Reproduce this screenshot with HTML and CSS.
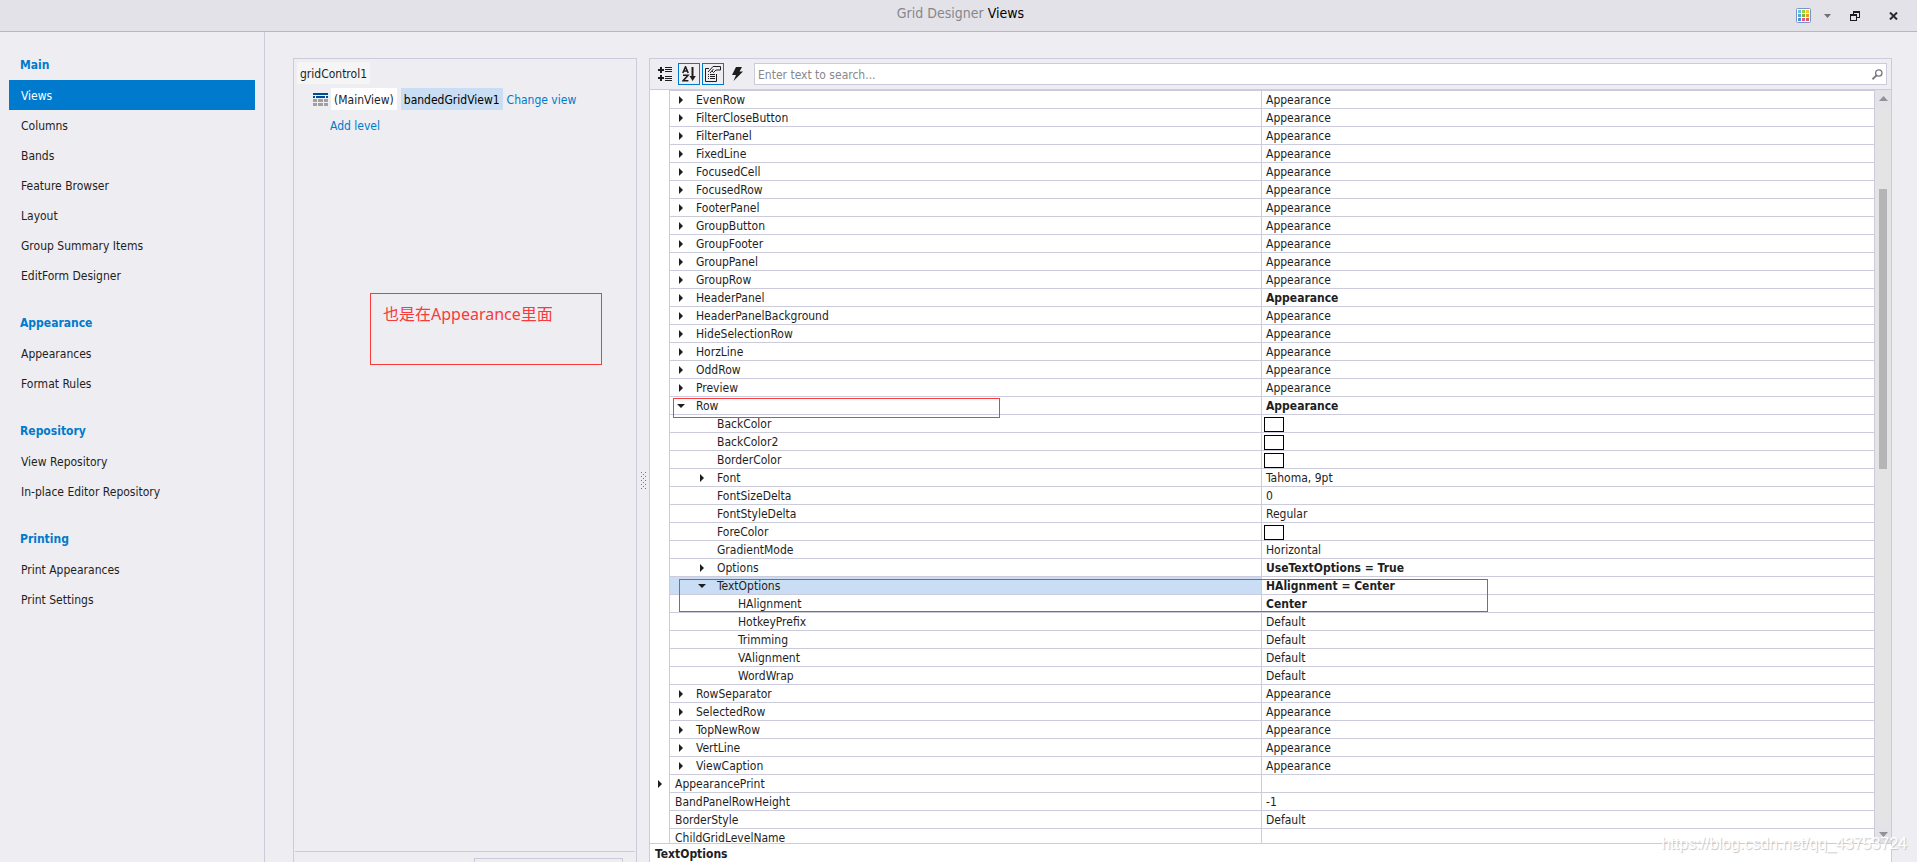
FILE: index.html
```html
<!DOCTYPE html>
<html lang="en">
<head>
<meta charset="utf-8">
<title>Grid Designer Views</title>
<link rel="stylesheet" href="styles.css">
</head>
<body>
<header class="titlebar">
  <h1 class="title"><span class="title-app">Grid Designer</span> Views</h1>
  <div class="window-buttons">
    <button class="win-btn skin" aria-label="Skin">
      <svg width="15" height="15" viewBox="0 0 15 15"><rect x=".5" y=".5" width="14" height="14" rx="1" fill="#fff" stroke="#7b93cc"/><path fill="#5fc9dc" d="M2 2h3v3H2z"/><path fill="#9ccb3b" d="M6 2h3v3H6z"/><path fill="#f0cd1e" d="M10 2h3v3h-3z"/><path fill="#57a3dc" d="M2 6h3v3H2z"/><path fill="#78b82a" d="M6 6h3v3H6z"/><path fill="#ec9a2d" d="M10 6h3v3h-3z"/><path fill="#4f8ade" d="M2 10h3v3H2z"/><path fill="#d957a5" d="M6 10h3v3H6z"/><path fill="#e0604c" d="M10 10h3v3h-3z"/></svg>
    </button>
    <button class="win-btn drop" aria-label="Skin menu">
      <svg width="7" height="4" viewBox="0 0 7 4"><path fill="#707075" d="M0 0h7L3.500 4z"/></svg>
    </button>
    <button class="win-btn restore" aria-label="Restore">
      <svg width="10" height="10" viewBox="0 0 10 10" fill="#1a1a1a"><path fill-rule="evenodd" d="M3 0h7v7H7V6h2V2H4v1H3zM0 3h7v7H0zM1 5v4h5V5z"/></svg>
    </button>
    <button class="win-btn close" aria-label="Close">
      <svg width="9" height="8" viewBox="0 0 9 8"><path d="M1 .5l7 7M8 .5l-7 7" stroke="#2a2a2a" stroke-width="2"/></svg>
    </button>
  </div>
</header>
<div class="workspace">
  <nav class="sidebar">
    <h2>Main</h2>
    <a href="#views" class="active">Views</a>
    <a href="#columns">Columns</a>
    <a href="#bands">Bands</a>
    <a href="#features">Feature Browser</a>
    <a href="#layout">Layout</a>
    <a href="#summary">Group Summary Items</a>
    <a href="#editform">EditForm Designer</a>
    <h2>Appearance</h2>
    <a href="#appearances">Appearances</a>
    <a href="#rules">Format Rules</a>
    <h2>Repository</h2>
    <a href="#view-repo">View Repository</a>
    <a href="#editor-repo">In-place Editor Repository</a>
    <h2>Printing</h2>
    <a href="#print-appearances">Print Appearances</a>
    <a href="#print-settings">Print Settings</a>
  </nav>
  <main class="content">
    <section class="levels">
      <div class="level-tree">
        <div class="level-root"><span class="chip">gridControl1</span></div>
        <div class="level-row">
          <svg width="15" height="13" viewBox="0 0 15 13" shape-rendering="crispEdges"><path fill="#004b93" d="M0 0h15v2H0zM0 3h2v2H0zM3 3h9v2H3zM13 3h2v2h-2z"/><path fill="#a0a0a3" d="M0 6h4v3H0zM5 6h5v3H5zM11 6h4v3h-4zM0 10h4v3H0zM5 10h5v3H5zM11 10h4v3h-4z"/></svg>
          <span class="chip main-view">(MainView)</span>
          <span class="chip view-name">bandedGridView1</span>
          <a href="#change">Change view</a>
        </div>
        <div class="level-add"><a href="#add">Add level</a></div>
      </div>
      <div class="levels-footer"><div class="footer-box"></div></div>
      <p class="note">也是在Appearance里面</p>
    </section>
    <div class="splitter">
      <svg width="5" height="17" viewBox="0 0 5 17" fill="#77777c" shape-rendering="crispEdges"><path d="M0 0h1v1H0zM4 0h1v1H4zM2 2h1v1H2zM0 4h1v1H0zM4 4h1v1H4zM2 6h1v1H2zM0 8h1v1H0zM4 8h1v1H4zM2 10h1v1H2zM0 12h1v1H0zM4 12h1v1H4zM2 14h1v1H2zM0 16h1v1H0zM4 16h1v1H4z"/></svg>
    </div>
    <section class="properties">
      <div class="toolbar">
        <button class="tool" aria-label="Categorized">
          <svg width="14" height="14" viewBox="0 0 14 14" fill="#1e1e1e"><path d="M0 2h2V0h2v2h2v2H4v2H2V4H0zM7 0h7v1H7zM7 2h7v1H7zM7 4h7v1H7zM0 10h2V8h2v2h2v2H4v2H2v-2H0zM7 9h7v1H7zM7 11h7v1H7zM7 13h7v1H7z"/></svg>
        </button>
        <button class="tool on" aria-label="Alphabetical">
          <svg width="14" height="16" viewBox="0 0 14 16" fill="none" stroke="#1e1e1e"><path stroke-width="1.600" d="M.8 7L3.500.8 6.200 7M1.800 5h3.500M1 9.300h5L1.200 14.700h5.200"/><path stroke-width="2" d="M10.500 1v11"/><path fill="#1e1e1e" stroke="none" d="M7.500 10h6.300l-3.200 5z"/></svg>
        </button>
        <button class="tool on" aria-label="Description">
          <svg width="16" height="16" viewBox="0 0 16 16" fill="none" stroke="#1e1e1e"><path d="M4 2.500H.500v13h11V8"/><path d="M3 6l5-5.500h7.500V4H11L8.500 6.500 7 5M5 7l3.500-4"/><path d="M3 8.500h1M5 8.500h5M3 10.500h1M5 10.500h5M3 12.500h1M5 12.500h5"/></svg>
        </button>
        <button class="tool" aria-label="Events">
          <svg width="11" height="14" viewBox="0 0 11 14" fill="#1e1e1e"><path d="M4 0h6L7.500 4.500H11L1.500 14 4 8H0z"/></svg>
        </button>
        <label class="search">
          <input type="text" aria-label="Search properties" placeholder="Enter text to search...">
          <svg width="11" height="11" viewBox="0 0 11 11" fill="none" stroke="#77777a"><circle cx="6.800" cy="4" r="3.200" stroke-width="1.300"/><path d="M4.500 6.300L.5 10.300" stroke-width="1.800"/></svg>
        </label>
      </div>
      <div class="grid">
        <div class="rows">
          <table>
            <colgroup><col class="c-gutter"><col class="c-name"><col></colgroup>
            <tbody>
              <tr><td></td><td class="l1"><button>EvenRow</button></td><td>Appearance</td></tr>
              <tr><td></td><td class="l1"><button>FilterCloseButton</button></td><td>Appearance</td></tr>
              <tr><td></td><td class="l1"><button>FilterPanel</button></td><td>Appearance</td></tr>
              <tr><td></td><td class="l1"><button>FixedLine</button></td><td>Appearance</td></tr>
              <tr><td></td><td class="l1"><button>FocusedCell</button></td><td>Appearance</td></tr>
              <tr><td></td><td class="l1"><button>FocusedRow</button></td><td>Appearance</td></tr>
              <tr><td></td><td class="l1"><button>FooterPanel</button></td><td>Appearance</td></tr>
              <tr><td></td><td class="l1"><button>GroupButton</button></td><td>Appearance</td></tr>
              <tr><td></td><td class="l1"><button>GroupFooter</button></td><td>Appearance</td></tr>
              <tr><td></td><td class="l1"><button>GroupPanel</button></td><td>Appearance</td></tr>
              <tr><td></td><td class="l1"><button>GroupRow</button></td><td>Appearance</td></tr>
              <tr><td></td><td class="l1"><button>HeaderPanel</button></td><td class="changed">Appearance</td></tr>
              <tr><td></td><td class="l1"><button>HeaderPanelBackground</button></td><td>Appearance</td></tr>
              <tr><td></td><td class="l1"><button>HideSelectionRow</button></td><td>Appearance</td></tr>
              <tr><td></td><td class="l1"><button>HorzLine</button></td><td>Appearance</td></tr>
              <tr><td></td><td class="l1"><button>OddRow</button></td><td>Appearance</td></tr>
              <tr><td></td><td class="l1"><button>Preview</button></td><td>Appearance</td></tr>
              <tr><td></td><td class="l1"><button class="open">Row</button></td><td class="changed">Appearance</td></tr>
              <tr><td></td><td class="l2">BackColor</td><td class="color"><span class="swatch"></span></td></tr>
              <tr><td></td><td class="l2">BackColor2</td><td class="color"><span class="swatch"></span></td></tr>
              <tr><td></td><td class="l2">BorderColor</td><td class="color"><span class="swatch"></span></td></tr>
              <tr><td></td><td class="l2"><button>Font</button></td><td>Tahoma, 9pt</td></tr>
              <tr><td></td><td class="l2">FontSizeDelta</td><td>0</td></tr>
              <tr><td></td><td class="l2">FontStyleDelta</td><td>Regular</td></tr>
              <tr><td></td><td class="l2">ForeColor</td><td class="color"><span class="swatch"></span></td></tr>
              <tr><td></td><td class="l2">GradientMode</td><td>Horizontal</td></tr>
              <tr><td></td><td class="l2"><button>Options</button></td><td class="changed">UseTextOptions = True</td></tr>
              <tr><td></td><td class="l2 selected"><button class="open">TextOptions</button></td><td class="changed">HAlignment = Center</td></tr>
              <tr><td></td><td class="l3">HAlignment</td><td class="changed">Center</td></tr>
              <tr><td></td><td class="l3">HotkeyPrefix</td><td>Default</td></tr>
              <tr><td></td><td class="l3">Trimming</td><td>Default</td></tr>
              <tr><td></td><td class="l3">VAlignment</td><td>Default</td></tr>
              <tr><td></td><td class="l3">WordWrap</td><td>Default</td></tr>
              <tr><td></td><td class="l1"><button>RowSeparator</button></td><td>Appearance</td></tr>
              <tr><td></td><td class="l1"><button>SelectedRow</button></td><td>Appearance</td></tr>
              <tr><td></td><td class="l1"><button>TopNewRow</button></td><td>Appearance</td></tr>
              <tr><td></td><td class="l1"><button>VertLine</button></td><td>Appearance</td></tr>
              <tr><td></td><td class="l1"><button>ViewCaption</button></td><td>Appearance</td></tr>
              <tr><td><button aria-label="Expand AppearancePrint"></button></td><td>AppearancePrint</td><td></td></tr>
              <tr><td></td><td>BandPanelRowHeight</td><td>-1</td></tr>
              <tr><td></td><td>BorderStyle</td><td>Default</td></tr>
              <tr><td></td><td>ChildGridLevelName</td><td></td></tr>
            </tbody>
          </table>
          <div class="mark mark-row"></div>
          <div class="mark mark-options"></div>
        </div>
        <div class="scrollbar">
          <svg width="9" height="5" viewBox="0 0 9 5"><path fill="#929296" d="M4.500 0L9 5H0z"/></svg>
          <div class="track"><div class="thumb"></div></div>
          <svg width="9" height="5" viewBox="0 0 9 5"><path fill="#929296" d="M0 0h9L4.500 5z"/></svg>
        </div>
      </div>
      <div class="description">TextOptions</div>
    </section>
  </main>
</div>
<div class="watermark">https://blog.csdn.net/qq_43753724</div>
</body>
</html>
```

FILE: styles.css
```css
*, *::before { box-sizing: border-box; }

:root {
  --line: #cbcbdc;
  --panel: #eeedf2;
  --blue: #007acc;
  --text: #1e1e1e;
  --red: #f83a3a;
}

body {
  margin: 0;
  height: 100vh;
  display: flex;
  flex-direction: column;
  overflow: hidden;
  background: var(--panel);
  color: var(--text);
  font: 12px/16px "DejaVu Sans Condensed", Tahoma, "Noto Sans", sans-serif;
}

button {
  padding: 0;
  border: 0;
  background: none;
  color: inherit;
  font: inherit;
}

a { color: var(--blue); text-decoration: none; }
svg { display: block; flex: none; }

/* title bar */
.titlebar {
  flex: none;
  position: relative;
  height: 32px;
  background: #e3e2e8;
  border-bottom: 1px solid #b4b4ca;
}
.title {
  margin: 0;
  padding: 3px 0 0 4px;
  font-size: 14px;
  line-height: 20px;
  font-weight: 400;
  text-align: center;
  color: #000;
}
.title-app { color: #88878c; }
.window-buttons {
  position: absolute;
  top: 0;
  right: 19px;
  height: 31px;
  display: flex;
  align-items: center;
}
.drop { margin-left: 13px; }
.restore { margin-left: 19px; }
.close { margin-left: 29px; }

.workspace { flex: 1; min-height: 0; display: flex; }

/* navigation */
.sidebar {
  flex: none;
  width: 265px;
  padding: 16px 9px 0;
  border-right: 1px solid var(--line);
}
.sidebar h2 {
  margin: 16px 0 0;
  padding: 2px 0 0 11px;
  font-size: 12px;
  line-height: 30px;
  color: var(--blue);
}
.sidebar h2:first-child { margin-top: 0; }
.sidebar a {
  display: block;
  padding: 2px 0 0 12px;
  line-height: 28px;
  color: var(--text);
}
.sidebar a.active { background: var(--blue); color: #fff; }

.content {
  flex: 1;
  min-width: 0;
  display: flex;
  padding: 26px 25px 0 28px;
}

/* level tree */
.levels {
  flex: none;
  position: relative;
  width: 344px;
  display: flex;
  flex-direction: column;
  border: 1px solid var(--line);
  border-bottom: 0;
}
.level-tree { flex: 1; padding: 3px; }
.chip { padding: 2px 3px 0; line-height: 20px; }
.level-root { display: flex; }
.level-root .chip { background: #f5f5f5; }
.level-row {
  display: flex;
  align-items: center;
  margin-top: 4px;
  padding-left: 16px;
}
.level-row a { padding-top: 2px; }
.main-view { margin-left: 3px; background: #fff; }
.view-name { margin: 0 4px; background: #c9ddf4; color: #000; }
.level-add { padding: 8px 0 0 33px; }
.levels-footer {
  flex: none;
  margin: 0 1px;
  padding: 6px 12px 0 0;
  border-top: 1px solid var(--line);
}
.footer-box {
  width: 149px;
  height: 4px;
  margin-left: auto;
  border: 1px solid var(--line);
  border-bottom: 0;
}
.note {
  position: absolute;
  top: 234px;
  left: 76px;
  width: 232px;
  height: 72px;
  margin: 0;
  padding: 8px 12px;
  border: 1px solid var(--red);
  color: var(--red);
  font: 16px/24px "Noto Sans", "Noto Sans CJK SC", sans-serif;
}

.splitter {
  flex: none;
  width: 12px;
  display: flex;
  align-items: center;
  justify-content: center;
  padding-top: 40px;
}

/* property grid */
.properties {
  flex: 1;
  min-width: 0;
  display: flex;
  flex-direction: column;
  border: 1px solid var(--line);
  border-bottom: 0;
}
.toolbar {
  flex: none;
  display: flex;
  align-items: center;
  gap: 2px;
  padding: 4px;
  border-bottom: 1px solid var(--line);
}
.tool {
  width: 22px;
  height: 22px;
  display: flex;
  align-items: center;
  justify-content: center;
}
.tool.on { border: 1px solid var(--blue); }
.search {
  flex: 1;
  display: flex;
  align-items: center;
  height: 22px;
  margin-left: 4px;
  padding: 0 3px;
  background: #fff;
  border: 1px solid var(--line);
}
.search input {
  flex: 1;
  min-width: 0;
  padding: 2px 0 0;
  border: 0;
  outline: 0;
  background: none;
  font: inherit;
}
.search input::placeholder { color: #88888c; opacity: 1; }

.grid {
  flex: 1;
  min-height: 0;
  display: flex;
  background: #fff;
}
.rows {
  flex: 1;
  min-width: 0;
  position: relative;
  overflow: hidden;
  border-right: 1px solid var(--line);
}
table {
  width: 100%;
  table-layout: fixed;
  border-collapse: separate;
  border-spacing: 0;
}
.c-gutter { width: 20px; }
.c-name { width: 592px; }
td {
  height: 18px;
  padding: 2px 4px 0;
  border-bottom: 1px solid var(--line);
  line-height: 15px;
  white-space: nowrap;
}
td:nth-child(1) { padding: 0 0 0 8px; border-bottom: 0; border-right: 1px solid var(--line); }
td:nth-child(2) { padding-left: 5px; border-right: 1px solid var(--line); }
tr:first-child td:nth-child(n+2) { border-top: 1px solid var(--line); }
td.l1:nth-child(2) { padding-left: 26px; }
td.l2:nth-child(2) { padding-left: 47px; }
td.l3:nth-child(2) { padding-left: 68px; }
td.selected { background: #c9ddf4; }
td.changed { font-weight: 700; }
td button {
  display: flex;
  align-items: center;
  margin-left: -17px;
}
td button::before {
  content: "";
  width: 4px;
  margin: 0 13px 1px 0;
  border: solid transparent;
  border-width: 4px 0 4px 4px;
  border-left-color: var(--text);
}
td button.open { margin-left: -19px; }
td button.open::before {
  width: 8px;
  margin-right: 11px;
  border-width: 4px 4px 0;
  border-color: var(--text) transparent transparent;
}
td:nth-child(1) button { margin-left: 0; }
td.color { padding: 1px 0 0 2px; }
.swatch {
  display: block;
  width: 20px;
  height: 15px;
  border: 1px solid #000;
}
.mark { position: absolute; border: 1px solid var(--red); }
.mark-row { top: 308px; left: 23px; width: 327px; height: 20px; }
.mark-options { top: 489px; left: 29px; width: 809px; height: 33px; }

.scrollbar {
  flex: none;
  width: 16px;
  display: flex;
  flex-direction: column;
  align-items: center;
  padding: 6px 0;
  background: #e3e2e8;
}
.track {
  flex: 1;
  align-self: stretch;
  margin: 6px 0;
  padding: 82px 4px 0;
  background: #e4e4e4;
}
.thumb { height: 44%; background: #b5b5b7; }

.description {
  flex: none;
  padding: 2px 5px 0;
  border-top: 1px solid var(--line);
  background: #fff;
  font-weight: 700;
  line-height: 16px;
}

.watermark {
  position: absolute;
  right: 10px;
  bottom: 8px;
  color: #fff;
  font: 16px/20px "Liberation Sans", Arial, sans-serif;
  text-shadow: 1px 1px 1px #c4c4c8;
}
```
